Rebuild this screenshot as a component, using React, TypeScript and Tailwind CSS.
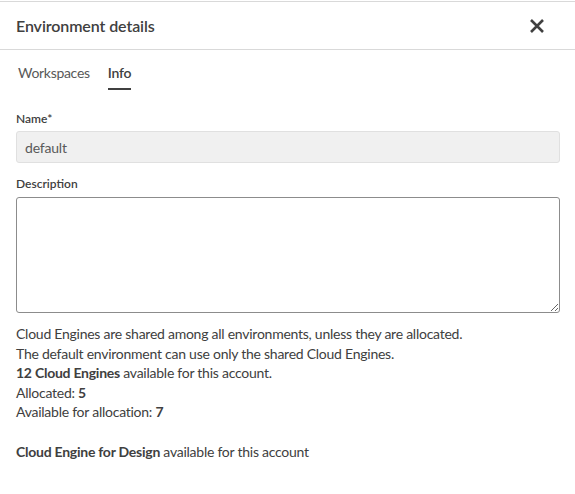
import React from "react";

const FONT = { fontFamily: "Lato, 'Noto Sans', sans-serif" };

export default function App() {
  return (
    <div className="w-[575px] h-[494px] bg-white text-[#404040] overflow-hidden" style={FONT}>
      <div className="border-t border-[#d9d9d9] mt-px" />
      {/* Header */}
      <div className="h-[48px] flex items-center justify-between pl-4 pr-[30px] pt-px border-b border-[#d9d9d9]">
        <h2 className="text-[16px] font-semibold tracking-[-0.1px] text-[#404040]">Environment details</h2>
        <button className="text-[#404040]">
          <svg width="16" height="16" viewBox="0 0 16 16">
            <path d="M2 2 L14 14 M14 2 L2 14" stroke="currentColor" strokeWidth="2.6" strokeLinecap="butt" />
          </svg>
        </button>
      </div>

      {/* Tabs */}
      <div className="flex items-end gap-[18px] px-[18px] h-[40px]">
        <div className="pb-[7px] text-[14px] tracking-[-0.3px] text-[#595959]">Workspaces</div>
        <div className="pb-[5px] border-b-2 border-[#404040] text-[14px] tracking-[-0.2px] font-semibold text-[#404040]">Info</div>
      </div>

      <div className="px-4 pt-[21px]">
        <label className="block text-[12px] font-semibold text-[#404040] leading-[16px]">Name*</label>
        <div className="mt-[4px] h-[32px] rounded-[3px] border border-[#e0e0e0] bg-[#f0f0f0] flex items-center px-2 text-[14px] tracking-[-0.2px] text-[#595959] w-[544px]">
          default
        </div>

        <label className="block mt-[13px] text-[12px] font-semibold text-[#404040] leading-[16px]">Description</label>
        <textarea className="mt-[5px] block w-[544px] h-[116px] rounded-[3px] border border-[#8c8c8c] bg-white outline-none" />

        <div className="mt-[11px] text-[14px] tracking-[-0.25px] leading-[19.6px] text-[#404040]">
          <p>Cloud Engines are shared among all environments, unless they are allocated.</p>
          <p>The default environment can use only the shared Cloud Engines.</p>
          <p>
            <span className="font-bold">12 Cloud Engines</span> available for this account.
          </p>
          <p>
            Allocated: <span className="font-bold">5</span>
          </p>
          <p>
            Available for allocation: <span className="font-bold">7</span>
          </p>
          <p className="mt-[19.6px]">
            <span className="font-bold">Cloud Engine for Design</span> available for this account
          </p>
        </div>
      </div>
    </div>
  );
}
